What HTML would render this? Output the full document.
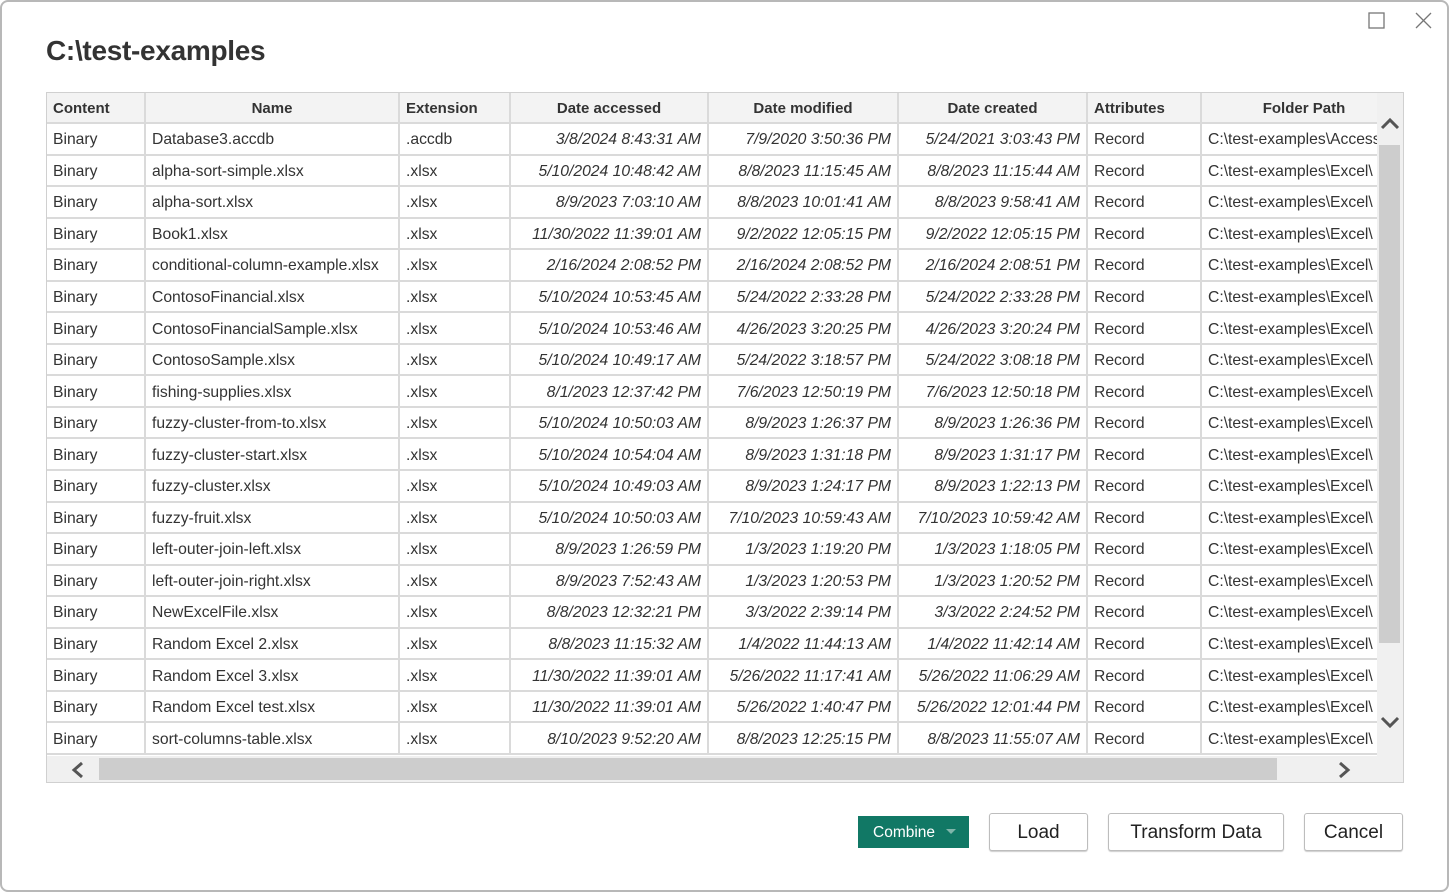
<!DOCTYPE html>
<html><head><meta charset="utf-8"><style>
html,body{margin:0;padding:0;background:#fff;}
body{width:1449px;height:892px;position:relative;overflow:hidden;font-family:"Segoe UI","Liberation Sans",sans-serif;color:#333;}
.win{position:absolute;left:0;top:0;width:1445px;height:888px;border:2px solid #b8b8b8;border-radius:8px;background:#fff;}
.title{position:absolute;left:46px;top:35px;font-size:28px;font-weight:600;color:#333;letter-spacing:-0.3px;}
.grid{position:absolute;left:46px;top:92px;width:1356px;height:689px;border:1px solid #d0d0d0;background:#f0f0f0;}
.clip{position:absolute;left:0;top:0;width:1330px;height:663px;overflow:hidden;background:#fff;}
table{border-collapse:collapse;table-layout:fixed;width:1360px;font-size:15.7px;}
td,th{border:2px solid #dadada;white-space:nowrap;overflow:hidden;padding:3px 6px 0 6px;height:26.55px;line-height:26px;box-sizing:content-box;}
th{background:#f3f3f3;font-weight:700;font-size:15px;height:26px;color:#333;}
th.l{text-align:left;}
td.d{text-align:right;font-style:italic;}
tr:first-child th{border-top:none;}
tr td:first-child,tr th:first-child{border-left:none;}
.vs{position:absolute;left:1330px;top:0;width:26px;height:663px;background:#f0f0f0;}
.vt{position:absolute;left:2px;top:52px;width:21px;height:498px;background:#cdcdcd;}
.hs{position:absolute;left:0;top:663px;width:1330px;height:26px;background:#f0f0f0;}
.ht{position:absolute;left:52px;top:2px;width:1178px;height:22px;background:#cdcdcd;}
.btn{position:absolute;top:813px;height:36px;border:1px solid #bdbdbd;border-radius:3px;background:#fff;font-size:19px;text-align:center;line-height:37px;color:#222;box-shadow:0 1px 1px #ccc;}
.comb{position:absolute;left:858px;top:816px;width:111px;height:32px;background:#117865;color:#fff;font-size:15.5px;line-height:34px;}
</style></head><body>
<div class="win"></div>
<svg style="position:absolute;left:1368px;top:12px" width="70" height="20"><rect x="1" y="1" width="15" height="15" fill="none" stroke="#777" stroke-width="1.3"/><path d="M48 1 L63 16 M63 1 L48 16" stroke="#777" stroke-width="1.3"/></svg>
<div class="title">C:\test-examples</div>
<div class="grid">
<div class="clip">
<table>
<colgroup><col style="width:98px"><col style="width:254px"><col style="width:111px"><col style="width:198px"><col style="width:190px"><col style="width:189px"><col style="width:114px"><col style="width:206px"></colgroup>
<tr><th class="l">Content</th><th>Name</th><th class="l">Extension</th><th>Date accessed</th><th>Date modified</th><th>Date created</th><th class="l">Attributes</th><th>Folder Path</th></tr>
<tr><td>Binary</td><td>Database3.accdb</td><td>.accdb</td><td class="d">3/8/2024 8:43:31 AM</td><td class="d">7/9/2020 3:50:36 PM</td><td class="d">5/24/2021 3:03:43 PM</td><td>Record</td><td>C:\test-examples\Access\</td></tr>
<tr><td>Binary</td><td>alpha-sort-simple.xlsx</td><td>.xlsx</td><td class="d">5/10/2024 10:48:42 AM</td><td class="d">8/8/2023 11:15:45 AM</td><td class="d">8/8/2023 11:15:44 AM</td><td>Record</td><td>C:\test-examples\Excel\</td></tr>
<tr><td>Binary</td><td>alpha-sort.xlsx</td><td>.xlsx</td><td class="d">8/9/2023 7:03:10 AM</td><td class="d">8/8/2023 10:01:41 AM</td><td class="d">8/8/2023 9:58:41 AM</td><td>Record</td><td>C:\test-examples\Excel\</td></tr>
<tr><td>Binary</td><td>Book1.xlsx</td><td>.xlsx</td><td class="d">11/30/2022 11:39:01 AM</td><td class="d">9/2/2022 12:05:15 PM</td><td class="d">9/2/2022 12:05:15 PM</td><td>Record</td><td>C:\test-examples\Excel\</td></tr>
<tr><td>Binary</td><td>conditional-column-example.xlsx</td><td>.xlsx</td><td class="d">2/16/2024 2:08:52 PM</td><td class="d">2/16/2024 2:08:52 PM</td><td class="d">2/16/2024 2:08:51 PM</td><td>Record</td><td>C:\test-examples\Excel\</td></tr>
<tr><td>Binary</td><td>ContosoFinancial.xlsx</td><td>.xlsx</td><td class="d">5/10/2024 10:53:45 AM</td><td class="d">5/24/2022 2:33:28 PM</td><td class="d">5/24/2022 2:33:28 PM</td><td>Record</td><td>C:\test-examples\Excel\</td></tr>
<tr><td>Binary</td><td>ContosoFinancialSample.xlsx</td><td>.xlsx</td><td class="d">5/10/2024 10:53:46 AM</td><td class="d">4/26/2023 3:20:25 PM</td><td class="d">4/26/2023 3:20:24 PM</td><td>Record</td><td>C:\test-examples\Excel\</td></tr>
<tr><td>Binary</td><td>ContosoSample.xlsx</td><td>.xlsx</td><td class="d">5/10/2024 10:49:17 AM</td><td class="d">5/24/2022 3:18:57 PM</td><td class="d">5/24/2022 3:08:18 PM</td><td>Record</td><td>C:\test-examples\Excel\</td></tr>
<tr><td>Binary</td><td>fishing-supplies.xlsx</td><td>.xlsx</td><td class="d">8/1/2023 12:37:42 PM</td><td class="d">7/6/2023 12:50:19 PM</td><td class="d">7/6/2023 12:50:18 PM</td><td>Record</td><td>C:\test-examples\Excel\</td></tr>
<tr><td>Binary</td><td>fuzzy-cluster-from-to.xlsx</td><td>.xlsx</td><td class="d">5/10/2024 10:50:03 AM</td><td class="d">8/9/2023 1:26:37 PM</td><td class="d">8/9/2023 1:26:36 PM</td><td>Record</td><td>C:\test-examples\Excel\</td></tr>
<tr><td>Binary</td><td>fuzzy-cluster-start.xlsx</td><td>.xlsx</td><td class="d">5/10/2024 10:54:04 AM</td><td class="d">8/9/2023 1:31:18 PM</td><td class="d">8/9/2023 1:31:17 PM</td><td>Record</td><td>C:\test-examples\Excel\</td></tr>
<tr><td>Binary</td><td>fuzzy-cluster.xlsx</td><td>.xlsx</td><td class="d">5/10/2024 10:49:03 AM</td><td class="d">8/9/2023 1:24:17 PM</td><td class="d">8/9/2023 1:22:13 PM</td><td>Record</td><td>C:\test-examples\Excel\</td></tr>
<tr><td>Binary</td><td>fuzzy-fruit.xlsx</td><td>.xlsx</td><td class="d">5/10/2024 10:50:03 AM</td><td class="d">7/10/2023 10:59:43 AM</td><td class="d">7/10/2023 10:59:42 AM</td><td>Record</td><td>C:\test-examples\Excel\</td></tr>
<tr><td>Binary</td><td>left-outer-join-left.xlsx</td><td>.xlsx</td><td class="d">8/9/2023 1:26:59 PM</td><td class="d">1/3/2023 1:19:20 PM</td><td class="d">1/3/2023 1:18:05 PM</td><td>Record</td><td>C:\test-examples\Excel\</td></tr>
<tr><td>Binary</td><td>left-outer-join-right.xlsx</td><td>.xlsx</td><td class="d">8/9/2023 7:52:43 AM</td><td class="d">1/3/2023 1:20:53 PM</td><td class="d">1/3/2023 1:20:52 PM</td><td>Record</td><td>C:\test-examples\Excel\</td></tr>
<tr><td>Binary</td><td>NewExcelFile.xlsx</td><td>.xlsx</td><td class="d">8/8/2023 12:32:21 PM</td><td class="d">3/3/2022 2:39:14 PM</td><td class="d">3/3/2022 2:24:52 PM</td><td>Record</td><td>C:\test-examples\Excel\</td></tr>
<tr><td>Binary</td><td>Random Excel 2.xlsx</td><td>.xlsx</td><td class="d">8/8/2023 11:15:32 AM</td><td class="d">1/4/2022 11:44:13 AM</td><td class="d">1/4/2022 11:42:14 AM</td><td>Record</td><td>C:\test-examples\Excel\</td></tr>
<tr><td>Binary</td><td>Random Excel 3.xlsx</td><td>.xlsx</td><td class="d">11/30/2022 11:39:01 AM</td><td class="d">5/26/2022 11:17:41 AM</td><td class="d">5/26/2022 11:06:29 AM</td><td>Record</td><td>C:\test-examples\Excel\</td></tr>
<tr><td>Binary</td><td>Random Excel test.xlsx</td><td>.xlsx</td><td class="d">11/30/2022 11:39:01 AM</td><td class="d">5/26/2022 1:40:47 PM</td><td class="d">5/26/2022 12:01:44 PM</td><td>Record</td><td>C:\test-examples\Excel\</td></tr>
<tr><td>Binary</td><td>sort-columns-table.xlsx</td><td>.xlsx</td><td class="d">8/10/2023 9:52:20 AM</td><td class="d">8/8/2023 12:25:15 PM</td><td class="d">8/8/2023 11:55:07 AM</td><td>Record</td><td>C:\test-examples\Excel\</td></tr>
</table>
</div>
<div class="vs"><div class="vt"></div>
<svg style="position:absolute;left:3px;top:24px" width="20" height="14"><path d="M2 11 L10 3 L18 11" fill="none" stroke="#555" stroke-width="3"/></svg>
<svg style="position:absolute;left:3px;top:622px" width="20" height="14"><path d="M2 3 L10 11 L18 3" fill="none" stroke="#555" stroke-width="3"/></svg>
</div>
<div class="hs"><div class="ht"></div>
<svg style="position:absolute;left:24px;top:5px" width="14" height="18"><path d="M11 2 L3 9 L11 16" fill="none" stroke="#555" stroke-width="3"/></svg>
<svg style="position:absolute;left:1290px;top:5px" width="14" height="18"><path d="M3 2 L11 9 L3 16" fill="none" stroke="#555" stroke-width="3"/></svg>
</div>
</div>
<div class="comb"><span style="position:absolute;left:15px">Combine</span><svg style="position:absolute;left:88px;top:13px" width="10" height="6"><path d="M0 0 L10 0 L5 5Z" fill="#7fb5aa"/></svg></div>
<div class="btn" style="left:989px;width:97px">Load</div>
<div class="btn" style="left:1108px;width:174px">Transform Data</div>
<div class="btn" style="left:1304px;width:97px">Cancel</div>
</body></html>
